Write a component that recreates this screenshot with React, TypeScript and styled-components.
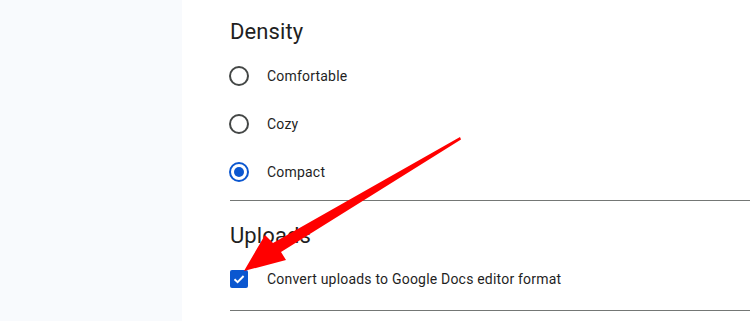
import { createGlobalStyle } from 'styled-components';
import styled from 'styled-components';

const GlobalStyle = createGlobalStyle`
  html, body {
    margin: 0;
    padding: 0;
    background: #ffffff;
    font-family: Roboto, "Noto Sans", Arial, sans-serif;
  }
`;

const Page = styled.div`
  position: relative;
  display: flex;
  width: 750px;
  height: 321px;
  overflow: hidden;
`;

const Sidebar = styled.aside`
  width: 182px;
  flex-shrink: 0;
  background: #f8fafd;
`;

const Main = styled.main`
  flex: 1;
  padding: 16px 0 0 48px;
`;

const Heading = styled.h2<{ $gap: number }>`
  margin: ${(p) => p.$gap}px 0 0;
  font-size: 22px;
  font-weight: 400;
  line-height: 32px;
  color: #1f1f1f;
  letter-spacing: 0.1px;
`;

const OptionList = styled.div<{ $gap: number }>`
  display: flex;
  flex-direction: column;
  margin-top: ${(p) => p.$gap}px;
`;

const OptionRow = styled.label<{ $indent: number }>`
  display: flex;
  align-items: center;
  gap: ${(p) => p.$indent}px;
  height: 48px;
  font-size: 14px;
  color: #1f1f1f;
  letter-spacing: 0.2px;
`;

const Radio = styled.span<{ $checked?: boolean }>`
  box-sizing: border-box;
  width: 20px;
  height: 20px;
  margin-left: -1px;
  border-radius: 50%;
  border: 2px solid ${(p) => (p.$checked ? '#0b57d0' : '#444746')};
  display: flex;
  align-items: center;
  justify-content: center;
  &::after {
    content: '';
    display: ${(p) => (p.$checked ? 'block' : 'none')};
    width: 10px;
    height: 10px;
    border-radius: 50%;
    background: #0b57d0;
  }
`;

const Checkbox = styled.span`
  width: 18px;
  height: 18px;
  border-radius: 2px;
  background: #0b57d0;
  display: flex;
  align-items: center;
  justify-content: center;
`;

const Divider = styled.hr<{ $gap: number }>`
  margin: ${(p) => p.$gap}px 0 0;
  border: none;
  border-top: 1px solid #747775;
`;

const Annotation = styled.svg`
  position: absolute;
  left: 0;
  top: 0;
  pointer-events: none;
`;

const densities = ['Comfortable', 'Cozy', 'Compact'];

export default function App() {
  return (
    <>
      <GlobalStyle />
      <Page>
        <Sidebar />
        <Main>
          <Heading $gap={0}>Density</Heading>
          <OptionList $gap={4}>
            {densities.map((d) => (
              <OptionRow key={d} $indent={18}>
                <Radio $checked={d === 'Compact'} />
                {d}
              </OptionRow>
            ))}
          </OptionList>
          <Divider $gap={4} />
          <Heading $gap={19}>Uploads</Heading>
          <OptionList $gap={3}>
            <OptionRow $indent={19}>
              <Checkbox>
                <svg width="14" height="14" viewBox="0 0 14 14">
                  <path d="M2.5 7.2 L5.6 10.2 L11.6 4" fill="none" stroke="#fff" strokeWidth="1.9" />
                </svg>
              </Checkbox>
              Convert uploads to Google Docs editor format
            </OptionRow>
          </OptionList>
          <Divider $gap={7} />
        </Main>
        {/* red arrow drawn over the screenshot */}
        <Annotation width="750" height="321" viewBox="0 0 750 321">
          <polygon
            points="460,137 461,139.5 281,252 286,260 244,271 265,235 273,243"
            fill="#ff0000"
          />
        </Annotation>
      </Page>
    </>
  );
}
